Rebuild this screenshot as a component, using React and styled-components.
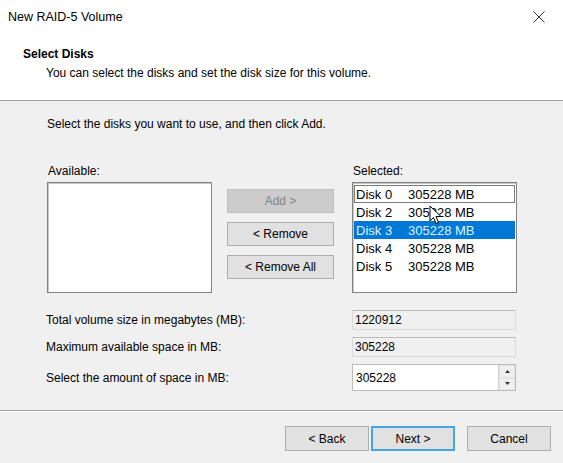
import React from "react"
import styled, { createGlobalStyle } from "styled-components"

const GlobalStyle = createGlobalStyle`
html, body {
margin: 0;
padding: 0;
background: #f0f0f0;
}
* {
box-sizing: border-box;
}
`

const disks = [
    { name: "Disk 0", size: "305228 MB", focus: true },
    { name: "Disk 2", size: "305228 MB" },
    { name: "Disk 3", size: "305228 MB", selected: true },
    { name: "Disk 4", size: "305228 MB" },
    { name: "Disk 5", size: "305228 MB" },
]

export default function App() {
    return (
        <>
            <GlobalStyle />
            <Window>
                <Header>
                    <TitleBar>
                        <Title>New RAID-5 Volume</Title>
                        <CloseButton aria-label="Close">
                            <svg width="12" height="12" viewBox="0 0 12 12">
                                <path d="M0.5 0.5 L11.5 11.5 M11.5 0.5 L0.5 11.5" stroke="#333" strokeWidth="1" fill="none" />
                            </svg>
                        </CloseButton>
                    </TitleBar>
                    <PageHeading>Select Disks</PageHeading>
                    <PageSubtitle>You can select the disks and set the disk size for this volume.</PageSubtitle>
                </Header>

                <Body>
                    <Intro>Select the disks you want to use, and then click Add.</Intro>

                    <ListsRow>
                        <ListColumn>
                            <Label>Available:</Label>
                            <ListBox />
                        </ListColumn>

                        <ButtonColumn>
                            <Button disabled>Add &gt;</Button>
                            <Button>&lt; Remove</Button>
                            <Button>&lt; Remove All</Button>
                        </ButtonColumn>

                        <ListColumn>
                            <Label>Selected:</Label>
                            <ListBox>
                                {disks.map((d) => (
                                    <ListItem key={d.name} $selected={d.selected} $focus={d.focus}>
                                        <DiskName>{d.name}</DiskName>
                                        <span>{d.size}</span>
                                    </ListItem>
                                ))}
                                <Cursor width="13" height="20" viewBox="0 0 13 20">
                                    <path d="M1 1 L1 16 L4.5 12.5 L7 18.5 L9.5 17.5 L7 11.5 L12 11.5 Z" fill="#fff" stroke="#000" strokeWidth="1" strokeLinejoin="round" />
                                </Cursor>
                            </ListBox>
                        </ListColumn>
                    </ListsRow>

                    <Fields>
                        <FieldRow>
                            <FieldLabel>Total volume size in megabytes (MB):</FieldLabel>
                            <ReadOnlyField>1220912</ReadOnlyField>
                        </FieldRow>
                        <FieldRow>
                            <FieldLabel>Maximum available space in MB:</FieldLabel>
                            <ReadOnlyField>305228</ReadOnlyField>
                        </FieldRow>
                        <FieldRow $tall>
                            <FieldLabel>Select the amount of space in MB:</FieldLabel>
                            <Spinner>
                                <SpinInput>305228</SpinInput>
                                <SpinButtons>
                                    <SpinButton>
                                        <svg width="5" height="3" viewBox="0 0 5 3"><path d="M0 3 L2.5 0 L5 3 Z" fill="#333" /></svg>
                                    </SpinButton>
                                    <SpinButton>
                                        <svg width="5" height="3" viewBox="0 0 5 3"><path d="M0 0 L2.5 3 L5 0 Z" fill="#333" /></svg>
                                    </SpinButton>
                                </SpinButtons>
                            </Spinner>
                        </FieldRow>
                    </Fields>
                </Body>

                <Footer>
                    <FooterButton>&lt; Back</FooterButton>
                    <FooterButton $default>Next &gt;</FooterButton>
                    <FooterButton $gap>Cancel</FooterButton>
                </Footer>
            </Window>
        </>
    )
}

const Window = styled.div`
width: 563px;
height: 463px;
display: flex;
flex-direction: column;
font-family: "Liberation Sans", Arial, sans-serif;
font-size: 12px;
color: #000;
background: #f0f0f0;
overflow: hidden;
`

const Header = styled.div`
height: 101px;
background: #fff;
border-bottom: 1px solid #a0a0a0;
display: flex;
flex-direction: column;
`

const TitleBar = styled.div`
height: 34px;
display: flex;
align-items: center;
justify-content: space-between;
padding: 0 18px 0 8px;
`

const Title = styled.div`
font-size: 12.5px;
color: #000;
`

const CloseButton = styled.div`
display: flex;
align-items: center;
`

const PageHeading = styled.div`
margin: 13px 0 0 23px;
font-weight: bold;
font-size: 12px;
line-height: 14px;
`

const PageSubtitle = styled.div`
margin: 5px 0 0 46px;
line-height: 14px;
`

const Body = styled.div`
height: 310px;
border-bottom: 1px solid #a0a0a0;
box-shadow: 0 1px 0 #fff;
padding: 16px 0 0 47px;
display: flex;
flex-direction: column;
`

const Intro = styled.div`
line-height: 14px;
`

const ListsRow = styled.div`
margin-top: 33px;
display: flex;
align-items: flex-start;
`

const ListColumn = styled.div`
display: flex;
flex-direction: column;
gap: 4px;
`

const Label = styled.div`
line-height: 14px;
padding-left: 1px;
`

const ListBox = styled.div`
position: relative;
width: 165px;
height: 111px;
background: #fff;
border: 1px solid #828282;
box-shadow: inset 1px 1px 0 #c8c8c8;
padding: 2px 1px 1px;
display: flex;
flex-direction: column;
`

const ListItem = styled.div`
height: 18px;
display: flex;
align-items: center;
padding-left: 2px;
font-size: 13px;
background: ${(p) => (p.$selected ? "#0078d7" : "transparent")};
color: ${(p) => (p.$selected ? "#dff3ff" : "#000")};
outline: ${(p) => (p.$focus ? "1px solid #7a7a7a" : "none")};
outline-offset: -1px;
`

const DiskName = styled.span`
width: 52px;
`

const Cursor = styled.svg`
position: absolute;
left: 76px;
top: 22px;
`

const ButtonColumn = styled.div`
margin: 25px 18px 0 15px;
display: flex;
flex-direction: column;
gap: 9px;
`

const Button = styled.div`
width: 107px;
height: 24px;
display: flex;
align-items: center;
justify-content: center;
background: ${(p) => (p.disabled ? "#cccccc" : "#e1e1e1")};
border: 1px solid ${(p) => (p.disabled ? "#bfbfbf" : "#adadad")};
color: ${(p) => (p.disabled ? "#838383" : "#000")};
`

const Fields = styled.div`
margin-top: 17px;
display: flex;
flex-direction: column;
gap: 7px;
`

const FieldRow = styled.div`
display: flex;
align-items: center;
height: ${(p) => (p.$tall ? "27px" : "20px")};
`

const FieldLabel = styled.div`
width: 306px;
margin-left: -1px;
`

const ReadOnlyField = styled.div`
width: 164px;
height: 20px;
background: #f0f0f0;
border: 1px solid #d9d9d9;
border-top-color: #bcbcbc;
padding-left: 2px;
display: flex;
align-items: center;
`

const Spinner = styled.div`
width: 164px;
height: 27px;
display: flex;
border: 1px solid #bcbcbc;
background: #fff;
`

const SpinInput = styled.div`
flex: 1;
display: flex;
align-items: center;
padding-left: 3px;
`

const SpinButtons = styled.div`
width: 17px;
display: flex;
flex-direction: column;
border-left: 1px solid #d0d0d0;
`

const SpinButton = styled.div`
flex: 1;
display: flex;
align-items: center;
justify-content: center;
background: #f0f0f0;
border: 1px solid #e4e4e4;
`

const Footer = styled.div`
flex: 1;
display: flex;
align-items: flex-start;
justify-content: flex-end;
padding: 15px 12px 0 0;
gap: 2px;
`

const FooterButton = styled.div`
width: 84px;
height: 25px;
margin-left: ${(p) => (p.$gap ? "10px" : "0")};
display: flex;
align-items: center;
justify-content: center;
background: #e1e1e1;
border: ${(p) => (p.$default ? "2px solid #45a3e6" : "1px solid #adadad")};
`
